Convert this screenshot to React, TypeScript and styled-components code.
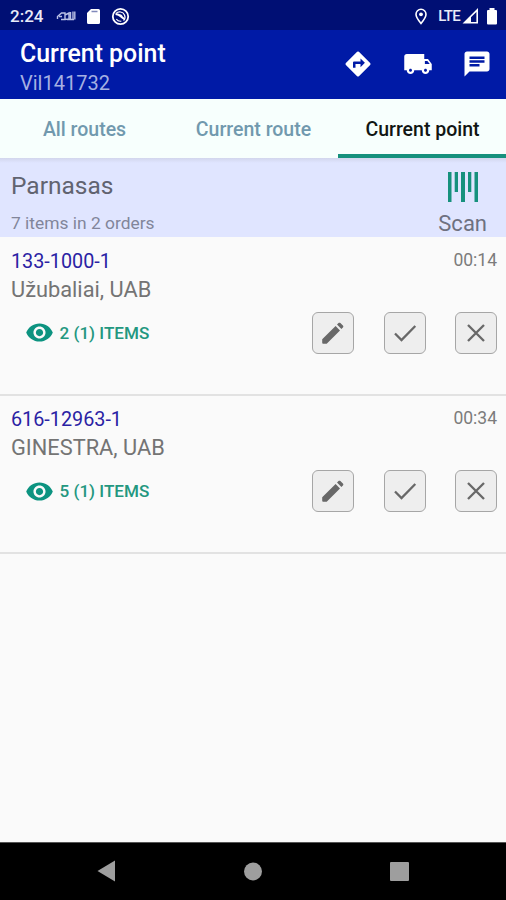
import React from "react";
import styled, { createGlobalStyle } from "styled-components";

const GlobalStyle = createGlobalStyle`
  *, *::before, *::after { box-sizing: border-box; }
  body { margin: 0; background: #fafafa; font-family: Roboto, "Liberation Sans", sans-serif; }
  button { font: inherit; padding: 0; border: 0; background: none; color: inherit; }
  svg { display: block; flex: none; }
`;

const Screen = styled.div`
  width: 506px;
  height: 900px;
  display: flex;
  flex-direction: column;
  overflow: hidden;
  background: #fafafa;
`;

const StatusBar = styled.div`
  height: 30px;
  flex: none;
  display: flex;
  align-items: center;
  justify-content: space-between;
  padding: 2px 8px 0 10px;
  background: #000f74;
  color: #e9ebf8;
`;

const StatusGroup = styled.div`
  display: flex;
  align-items: center;
`;

const Clock = styled.span`
  width: 46px;
  font-size: 17px;
  line-height: 28px;
  font-weight: 500;
`;

const Network = styled.span`
  margin-left: 10px;
  font-size: 15px;
  line-height: 26px;
  margin-bottom: 1px;
  letter-spacing: -0.7px;
  font-weight: 500;
`;

const StatusIcon = styled.svg<{ $gap: number }>`
  margin-left: ${(p) => p.$gap}px;
`;

const AppBar = styled.header`
  height: 69px;
  flex: none;
  display: flex;
  justify-content: space-between;
  padding: 8px 14px 0 20px;
  background: #001aa6;
  color: #fff;
`;

const Title = styled.h1`
  margin: 0;
  padding-top: 1px;
  font-size: 24.9px;
  line-height: 30px;
  font-weight: 500;
`;

const Subtitle = styled.div`
  font-size: 20px;
  line-height: 28px;
  color: #a5b0e2;
`;

const AppActions = styled.div`
  display: flex;
  gap: 29.5px;
  height: 52px;
  align-items: center;
`;

const Tabs = styled.nav`
  height: 59px;
  flex: none;
  display: grid;
  grid-template-columns: 168px 170px 168px;
  background: #f7fffd;
`;

const Tab = styled.button<{ $active?: boolean }>`
  height: 59px;
  padding: 6px 0 0 1px;
  font-size: 19.5px;
  font-weight: 500;
  text-align: center;
  color: ${(p) => (p.$active ? "#111614" : "#7199ae")};
  border-bottom: 4px solid ${(p) => (p.$active ? "#16917d" : "transparent")};
`;

const PointHeader = styled.section`
  height: 79px;
  flex: none;
  display: flex;
  justify-content: space-between;
  padding: 12px 19px 0 11px;
  background: linear-gradient(#d2d6ed, #e0e5ff 5px);
`;

const PointName = styled.div`
  font-size: 24.5px;
  line-height: 31px;
  color: #616370;
`;

const PointSummary = styled.div`
  margin-top: 9px;
  font-size: 17.4px;
  line-height: 27px;
  color: #82859a;
`;

const ScanButton = styled.button`
  display: flex;
  flex-direction: column;
  align-items: center;
  height: 67px;
  padding-top: 2px;
`;

const ScanLabel = styled.span`
  margin-top: 9px;
  font-size: 22px;
  line-height: 26px;
  color: #6e7180;
`;

const Order = styled.article`
  height: 158.5px;
  flex: none;
  padding: 10.8px 9px 0 11px;
  border-bottom: 2px solid #e2e2e2;
`;

const OrderTop = styled.div`
  display: flex;
  justify-content: space-between;
`;

const OrderNumber = styled.span`
  padding-top: 1px;
  font-size: 19.8px;
  line-height: 26px;
  color: #2a22a4;
`;

const OrderTime = styled.time`
  font-size: 17.5px;
  line-height: 24px;
  color: #7c7c7c;
`;

const Client = styled.div`
  margin-top: 2px;
  font-size: 21.8px;
  line-height: 26px;
  color: #747474;
`;

const OrderTools = styled.div`
  display: flex;
  align-items: center;
  justify-content: space-between;
  margin-top: 9px;
  padding-left: 14px;
`;

const ItemsLink = styled.button`
  display: flex;
  align-items: center;
  gap: 5.5px;
  font-size: 17.1px;
  line-height: 24px;
  font-weight: 500;
  color: #23977f;
`;

const ToolGroup = styled.div`
  display: flex;
  gap: 29.3px;
`;

const ToolButton = styled.button`
  width: 42px;
  height: 42px;
  display: flex;
  align-items: center;
  justify-content: center;
  border: 1px solid #a6a6a6;
  border-radius: 6px;
  background: #eeeeee;
  color: #686868;
`;

const Spacer = styled.div`
  flex: 1;
`;

const NavBar = styled.footer`
  height: 58px;
  flex: none;
  display: flex;
  align-items: center;
  justify-content: space-between;
  padding: 0 97px 1px 97px;
  background: #000;
  border-top: 1px solid #555;
`;

const Glyph = ({ d, size, color = "currentColor" }: { d: string; size: number; color?: string }) => (
  <svg width={size} height={size} viewBox="0 0 24 24" fill={color}>
    <path d={d} />
  </svg>
);

const PATHS = {
  directions:
    "M21.71 11.29l-9-9a.996.996 0 0 0-1.41 0l-9 9a.996.996 0 0 0 0 1.41l9 9c.39.39 1.02.39 1.41 0l9-9a.996.996 0 0 0 0-1.41zM14 14.5V12h-4v3H8v-4c0-.55.45-1 1-1h5V7.5l3.5 3.5-3.5 3.5z",
  truck:
    "M20 8h-3V4H3c-1.1 0-2 .9-2 2v11h2c0 1.66 1.34 3 3 3s3-1.34 3-3h6c0 1.66 1.34 3 3 3s3-1.34 3-3h2v-5l-3-4zM6 18.200c-.7 0-1.200-.5-1.200-1.200s.5-1.200 1.200-1.200 1.200.5 1.200 1.200-.5 1.200-1.200 1.200zm13.500-8.700l1.960 2.500H17.500V9.500h2zM18 18.200c-.7 0-1.200-.5-1.200-1.200s.5-1.200 1.200-1.200 1.200.5 1.200 1.200-.5 1.200-1.200 1.200z",
  chat: "M20 2H4c-1.1 0-1.99.9-1.99 2L2 22l4-4h14c1.1 0 2-.9 2-2V4c0-1.1-.9-2-2-2zM6 9h12v2H6V9zm8 5H6v-2h8v2zm4-6H6V6h12v2z",
  eye: "M12 4.5C7 4.5 2.73 7.61 1 12c1.73 4.39 6 7.5 11 7.5s9.27-3.11 11-7.5c-1.73-4.39-6-7.5-11-7.5zM12 17c-2.76 0-5-2.24-5-5s2.24-5 5-5 5 2.24 5 5-2.24 5-5 5zm0-8c-1.66 0-3 1.34-3 3s1.34 3 3 3 3-1.34 3-3-1.34-3-3-3z",
};

const PencilIcon = () => (
  <svg width="26" height="26" viewBox="0 0 26 26" fill="currentColor">
    <path d="M2.2 19.3 15.6 6l4.4 4.4L6.7 23.7H3.1a.9.9 0 0 1-.9-.9zM17 4.600l1.500-1.500c.6-.6 1.300-.6 1.900 0l2.500 2.500c.6.6.6 1.300 0 1.900L21.400 9z" />
  </svg>
);

const StrokeIcon = ({ d }: { d: string }) => (
  <svg width="26" height="26" viewBox="0 0 26 26" fill="none" stroke="currentColor" strokeWidth="2.3">
    <path d={d} />
  </svg>
);

const OrderCard = ({ number, client, items, time }: { number: string; client: string; items: string; time: string }) => (
  <Order>
    <OrderTop>
      <OrderNumber>{number}</OrderNumber>
      <OrderTime>{time}</OrderTime>
    </OrderTop>
    <Client>{client}</Client>
    <OrderTools>
      <ItemsLink>
        <Glyph d={PATHS.eye} size={29} color="#0c9380" />
        <span>{items}</span>
      </ItemsLink>
      <ToolGroup>
        <ToolButton aria-label="Edit">
          <PencilIcon />
        </ToolButton>
        <ToolButton aria-label="Confirm">
          <StrokeIcon d="M3 13.500l6.500 6.500L23.300 6" />
        </ToolButton>
        <ToolButton aria-label="Reject">
          <StrokeIcon d="M5 5l16 16M21 5L5 21" />
        </ToolButton>
      </ToolGroup>
    </OrderTools>
  </Order>
);

const ORDERS = [
  { number: "133-1000-1", client: "Užubaliai, UAB", items: "2 (1) ITEMS", time: "00:14" },
  { number: "616-12963-1", client: "GINESTRA, UAB", items: "5 (1) ITEMS", time: "00:34" },
];

export default function App() {
  return (
    <>
      <GlobalStyle />
      <Screen>
        <StatusBar>
          <StatusGroup>
            <Clock>2:24</Clock>
            <svg width="20" height="14" viewBox="0 0 20 14" fill="none" stroke="#b9c0e6" strokeWidth="1.400">
              <path d="M1.500 10V7.500l4-3.500H9v6.500H5M3 7.500h3M9 6l4-2v6l-4 .500M14.500 3v7M17 2.500v8M18.800 2.500v8M11 10.500h7" />
            </svg>
            <StatusIcon $gap={10} width="15" height="17" viewBox="0 0 15 17" fill="#fff">
              <path d="M5 1h7.500A1.500 1.500 0 0 1 14 2.500v12a1.500 1.500 0 0 1-1.500 1.500h-10A1.500 1.500 0 0 1 1 14.500V5z" />
              <path d="M5.500 3.500h6" stroke="#8189bb" strokeWidth="1.500" />
            </StatusIcon>
            <StatusIcon $gap={10} width="19" height="19" viewBox="0 0 19 19" fill="none" stroke="#fff">
              <circle cx="9.500" cy="9.500" r="7.700" strokeWidth="1.800" />
              <path d="M5 6.500c2.500-2.500 7-2 8.500 1.500s0 4.500-1 5.500M5.300 12c1.200 1.700 3 2.500 5 2.200" strokeWidth="1.200" />
              <path d="M4.500 7.500c3-1.500 4.500 2 9 4.500M7.500 8.500c1.500-1 3 0 3.500 1.500" strokeWidth="1.900" />
            </StatusIcon>
          </StatusGroup>
          <StatusGroup>
            <svg width="14" height="17" viewBox="0 0 14 17" fill="none" stroke="#fff">
              <path d="M7 15.500C4.500 12.500 2 9.300 2 6.300a5 5 0 0 1 10 0c0 3-2.500 6.200-5 9.200z" strokeWidth="1.600" />
              <circle cx="7" cy="6.300" r="1.900" fill="#fff" stroke="none" />
            </svg>
            <Network>LTE</Network>
            <StatusIcon $gap={2} width="17" height="16" viewBox="0 0 17 16" fill="#fff">
              <path fillRule="evenodd" d="M16 0v15.500H.5zM14.400 4L9 9.300v4.600h5.400z" />
            </StatusIcon>
            <StatusIcon $gap={7} width="12" height="17" viewBox="0 0 12 17" fill="#fff">
              <path d="M3.500 0h5v2H10a1 1 0 0 1 1 1v12.500a1 1 0 0 1-1 1H2a1 1 0 0 1-1-1V3a1 1 0 0 1 1-1h1.500z" />
            </StatusIcon>
          </StatusGroup>
        </StatusBar>
        <AppBar>
          <div>
            <Title>Current point</Title>
            <Subtitle>Vil141732</Subtitle>
          </div>
          <AppActions>
            <Glyph d={PATHS.directions} size={30} />
            <Glyph d={PATHS.truck} size={30} />
            <Glyph d={PATHS.chat} size={30} />
          </AppActions>
        </AppBar>
        <Tabs>
          <Tab>All routes</Tab>
          <Tab>Current route</Tab>
          <Tab $active>Current point</Tab>
        </Tabs>
        <PointHeader>
          <div>
            <PointName>Parnasas</PointName>
            <PointSummary>7 items in 2 orders</PointSummary>
          </div>
          <ScanButton>
            <svg width="32" height="30" viewBox="0 0 32 30" fill="#16917d">
              <path d="M1 0h3.500v30H1zM7.700 0h3.300v20H7.700zM14 0h4v30h-4zM21 0h3.300v20H21zM27.500 0H31v30h-3.500z" />
            </svg>
            <ScanLabel>Scan</ScanLabel>
          </ScanButton>
        </PointHeader>
        {ORDERS.map((order) => (
          <OrderCard key={order.number} {...order} />
        ))}
        <Spacer />
        <NavBar>
          <svg width="18" height="22" viewBox="0 0 18 22" fill="#9e9e9e">
            <path d="M18 .5v21L.5 11z" />
          </svg>
          <svg width="19" height="19" viewBox="0 0 19 19" fill="#9e9e9e">
            <circle cx="10" cy="9.500" r="9" />
          </svg>
          <svg width="19" height="19" viewBox="0 0 19 19" fill="#9e9e9e">
            <rect width="19" height="19" rx="1" />
          </svg>
        </NavBar>
      </Screen>
    </>
  );
}
